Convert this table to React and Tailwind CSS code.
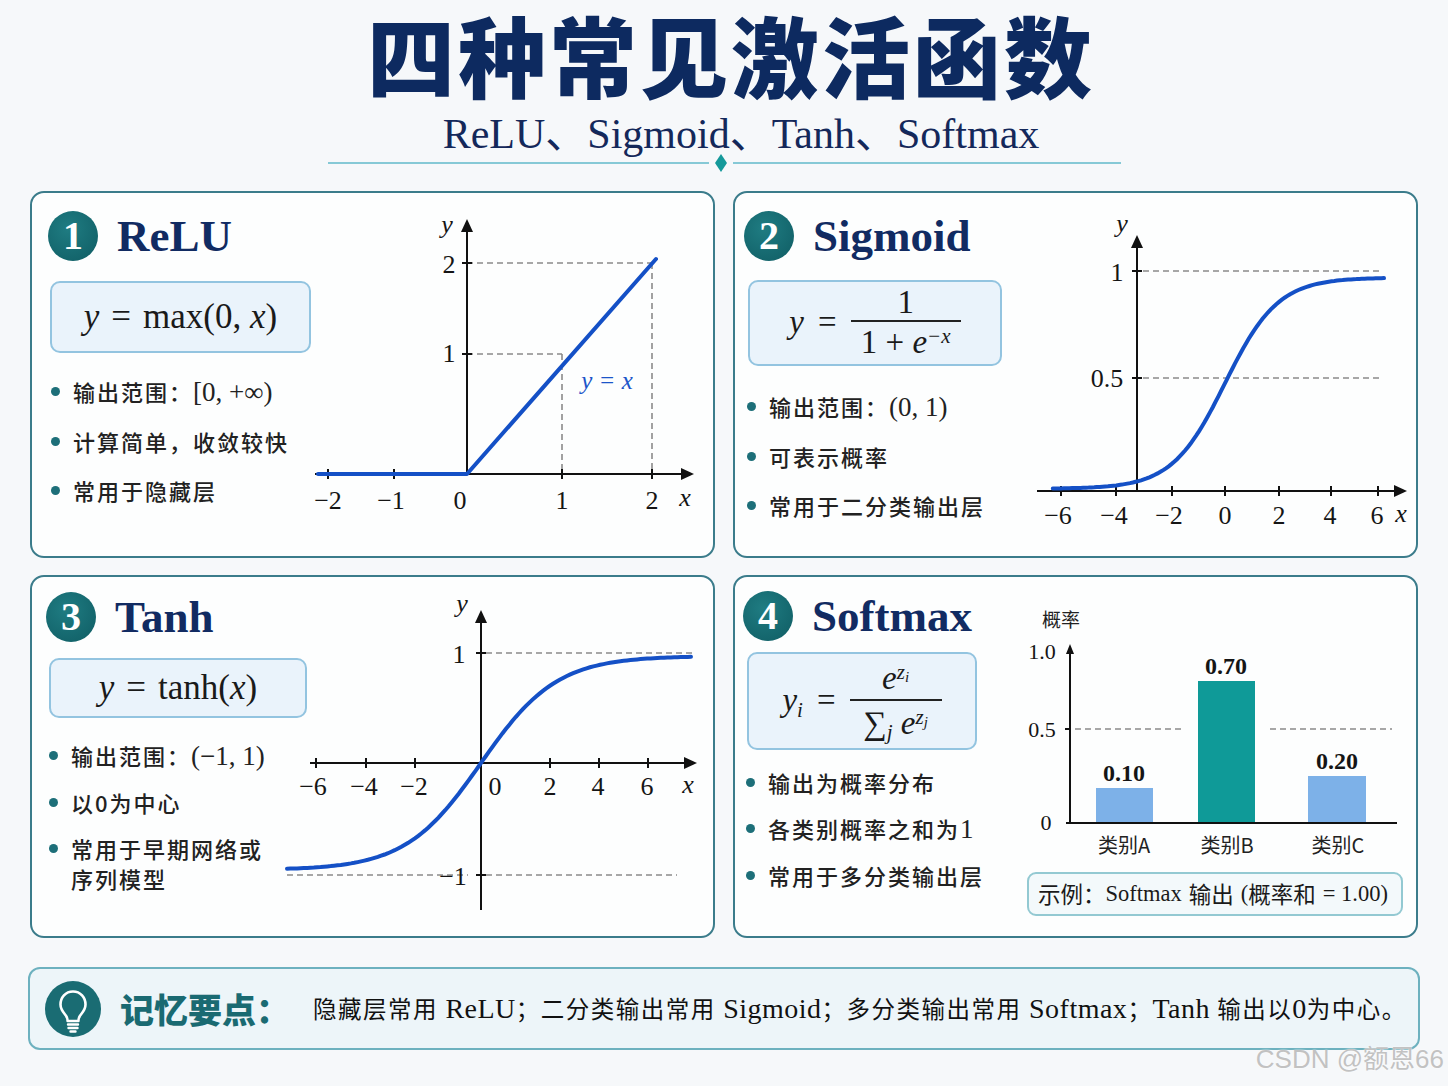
import React from "react";

const SERIF = "font-['Liberation_Serif','Noto_Sans_CJK_SC',serif]";
const CJK = "font-['Noto_Sans_CJK_SC',sans-serif]";

// curve data for the plots (page coordinates, the svgs use matching viewBoxes)
const sigmoidPts = (() => {
  const pts = [];
  for (let i = 0; i <= 120; i++) {
    const u = -6.5 + (12.5 * i) / 120;
    const x = 1225 + 26.5 * u;
    const y = 491 - 220 * (0.01 + 0.96 / (1 + Math.exp(-u)));
    pts.push(`${x.toFixed(1)},${y.toFixed(1)}`);
  }
  return pts.join(" ");
})();

const tanhPts = (() => {
  const pts = [];
  for (let i = 0; i <= 120; i++) {
    const u = -6.93 + (14.43 * i) / 120;
    const x = 481 + 28 * u;
    const y = 763 - 107 * Math.tanh(u / 2.7);
    pts.push(`${x.toFixed(1)},${y.toFixed(1)}`);
  }
  return pts.join(" ");
})();

const T = ({ x, y, children, italic, anchor = "middle", size = 26, fill = "#151515", weight }) => (
  <text
    x={x}
    y={y}
    textAnchor={anchor}
    fontSize={size}
    fontFamily="'Liberation Serif', 'Noto Sans CJK SC', serif"
    fontStyle={italic ? "italic" : "normal"}
    fontWeight={weight}
    fill={fill}
  >
    {children}
  </text>
);

const Badge = ({ n }) => (
  <div className="flex h-[50px] w-[50px] shrink-0 items-center justify-center rounded-full bg-[radial-gradient(circle_at_40%_35%,#1f7c82,#0f5c63)] font-['Liberation_Serif',serif] text-[40px] font-bold leading-none text-white">
    {n}
  </div>
);

const Heading = ({ n, children }) => (
  <div className="flex h-[50px] items-center gap-[19px]">
    <Badge n={n} />
    <h2 className="font-['Liberation_Serif',serif] text-[45px] font-bold leading-none text-[#112b62]">
      {children}
    </h2>
  </div>
);

const Bullet = ({ children }) => (
  <li className="flex items-start gap-[13px]">
    <span className="ml-[3px] mt-[11px] h-[9px] w-[9px] shrink-0 rounded-full bg-[#1d6f79]" />
    <span className={`${CJK} text-[22px] font-medium leading-[30px] tracking-[2px] text-[#222]`}>
      {children}
    </span>
  </li>
);

const M = ({ children }) => (
  <span className={`${SERIF} text-[27px] font-normal tracking-normal`}>{children}</span>
);

const L = ({ children }) => <span className="text-[28px] tracking-[0.5px]">{children}</span>;

const FormulaBox = ({ className, children }) => (
  <div
    className={`flex items-center justify-center rounded-[10px] border-2 border-[#93c4e0] bg-[#eaf3fb] ${SERIF} text-[#1a1a1a] ${className}`}
  >
    {children}
  </div>
);

const Dashes = ({ d }) => (
  <path d={d} stroke="#8a8a8a" strokeWidth="1.6" strokeDasharray="6 4" fill="none" />
);

function ReluPlot() {
  return (
    <svg className="mt-[12px]" width="400" height="320" viewBox="305 205 400 320">
      <Dashes d="M467 263 H652 M467 354 H562 M562 354 V474 M652 263 V474" />
      <line x1="315" y1="474" x2="684" y2="474" stroke="#111" strokeWidth="2" />
      <polygon points="694,474 681,468 681,480" fill="#111" />
      <line x1="467" y1="474" x2="467" y2="230" stroke="#111" strokeWidth="2" />
      <polygon points="467,219 461,232 473,232" fill="#111" />
      {[328, 394, 562, 652].map((x) => (
        <line key={x} x1={x} y1="469" x2={x} y2="479" stroke="#111" strokeWidth="2" />
      ))}
      <line x1="462" y1="263" x2="472" y2="263" stroke="#111" strokeWidth="2" />
      <line x1="462" y1="354" x2="472" y2="354" stroke="#111" strokeWidth="2" />
      <polyline
        points="318,474 467,474 656,259"
        fill="none"
        stroke="#1450c6"
        strokeWidth="4"
        strokeLinecap="round"
        strokeLinejoin="round"
      />
      <T x={447} y={233} italic>y</T>
      <T x={449} y={273}>2</T>
      <T x={449} y={362}>1</T>
      <T x={328} y={509}>−2</T>
      <T x={391} y={509}>−1</T>
      <T x={460} y={509}>0</T>
      <T x={562} y={509}>1</T>
      <T x={652} y={509}>2</T>
      <T x={685} y={506} italic>x</T>
      <T x={607} y={389} italic size={25} fill="#1c55c9">y = x</T>
    </svg>
  );
}

function SigmoidPlot() {
  return (
    <svg className="mt-[12px]" width="385" height="330" viewBox="1030 205 385 330">
      <Dashes d="M1143 271 H1380 M1143 378 H1380" />
      <line x1="1037" y1="491" x2="1396" y2="491" stroke="#111" strokeWidth="2" />
      <polygon points="1407,491 1394,485 1394,497" fill="#111" />
      <line x1="1137" y1="491" x2="1137" y2="246" stroke="#111" strokeWidth="2" />
      <polygon points="1137,235 1131,248 1143,248" fill="#111" />
      {[1061, 1116, 1172, 1225, 1279, 1331, 1378].map((x) => (
        <line key={x} x1={x} y1="486" x2={x} y2="496" stroke="#111" strokeWidth="2" />
      ))}
      <line x1="1132" y1="271" x2="1142" y2="271" stroke="#111" strokeWidth="2" />
      <line x1="1132" y1="378" x2="1142" y2="378" stroke="#111" strokeWidth="2" />
      <polyline points={sigmoidPts} fill="none" stroke="#1450c6" strokeWidth="4" strokeLinecap="round" />
      <T x={1122} y={232} italic>y</T>
      <T x={1117} y={281}>1</T>
      <T x={1107} y={387}>0.5</T>
      <T x={1058} y={524}>−6</T>
      <T x={1114} y={524}>−4</T>
      <T x={1169} y={524}>−2</T>
      <T x={1225} y={524}>0</T>
      <T x={1279} y={524}>2</T>
      <T x={1330} y={524}>4</T>
      <T x={1377} y={524}>6</T>
      <T x={1401} y={522} italic>x</T>
    </svg>
  );
}

function TanhPlot() {
  return (
    <svg className="mt-[13px]" width="425" height="330" viewBox="280 590 425 330">
      <Dashes d="M486 653 H692 M287 875 H468 M486 875 H677" />
      <line x1="310" y1="763" x2="686" y2="763" stroke="#111" strokeWidth="2" />
      <polygon points="697,763 684,757 684,769" fill="#111" />
      <line x1="481" y1="910" x2="481" y2="621" stroke="#111" strokeWidth="2" />
      <polygon points="481,610 475,623 487,623" fill="#111" />
      {[316, 366, 415, 550, 599, 648].map((x) => (
        <line key={x} x1={x} y1="758" x2={x} y2="768" stroke="#111" strokeWidth="2" />
      ))}
      <line x1="476" y1="653" x2="486" y2="653" stroke="#111" strokeWidth="2" />
      <line x1="476" y1="875" x2="486" y2="875" stroke="#111" strokeWidth="2" />
      <polyline points={tanhPts} fill="none" stroke="#1450c6" strokeWidth="4" strokeLinecap="round" />
      <T x={462} y={612} italic>y</T>
      <T x={459} y={663}>1</T>
      <T x={453} y={885}>−1</T>
      <T x={313} y={795}>−6</T>
      <T x={364} y={795}>−4</T>
      <T x={414} y={795}>−2</T>
      <T x={495} y={795}>0</T>
      <T x={550} y={795}>2</T>
      <T x={598} y={795}>4</T>
      <T x={647} y={795}>6</T>
      <T x={688} y={793} italic>x</T>
    </svg>
  );
}

function SoftmaxChart() {
  return (
    <svg width="390" height="265" viewBox="1025 600 390 265">
      <text x="1061" y="628" textAnchor="middle" fontSize="19" fontFamily="'Noto Sans CJK SC', sans-serif" fill="#222">
        概率
      </text>
      <Dashes d="M1075 730 H1183 M1270 730 H1392" />
      <line x1="1070" y1="824" x2="1070" y2="654" stroke="#111" strokeWidth="2" />
      <polygon points="1070,645 1066,655 1074,655" fill="#111" />
      <line x1="1065" y1="730" x2="1070" y2="730" stroke="#111" strokeWidth="2" />
      <line x1="1066" y1="824" x2="1397" y2="824" stroke="#111" strokeWidth="2" />
      <rect x="1096" y="789" width="57" height="34" fill="#7db1e8" />
      <rect x="1198" y="682" width="57" height="141" fill="#0f9a98" />
      <rect x="1308" y="777" width="58" height="46" fill="#7db1e8" />
      <T x={1042} y={660} size={22}>1.0</T>
      <T x={1042} y={738} size={22}>0.5</T>
      <T x={1046} y={831} size={22}>0</T>
      <T x={1124} y={782} size={24} weight="600">0.10</T>
      <T x={1226} y={675} size={24} weight="600">0.70</T>
      <T x={1337} y={770} size={24} weight="600">0.20</T>
      {[
        [1124, "类别A"],
        [1227, "类别B"],
        [1338, "类别C"],
      ].map(([x, t]) => (
        <text key={t} x={x} y="854" textAnchor="middle" fontSize="20" fontFamily="'Noto Sans CJK SC', sans-serif" fill="#222">
          {t}
        </text>
      ))}
    </svg>
  );
}

export default function App() {
  return (
    <div className="relative min-h-[1086px] w-[1448px] bg-[#f6f8fa]">
      {/* Header */}
      <header className="flex h-[191px] flex-col items-center pt-[3px]">
        <h1 className={`${CJK} ml-[14px] text-[88px] font-black leading-[100px] tracking-[3px] text-[#0d2a60]`}>
          四种常见激活函数
        </h1>
        <p className={`${SERIF} ml-[34px] mt-[7px] text-[42px] leading-[48px] text-[#14285a]`}>
          ReLU、Sigmoid、Tanh、Softmax
        </p>
        <div className="-mt-[2px] flex h-[14px] items-center gap-[6px]">
          <div className="h-[2px] w-[381px] bg-[#86c9d6]" />
          <svg width="12" height="18" viewBox="0 0 12 18">
            <polygon points="6,0 12,9 6,18 0,9" fill="#15999a" />
          </svg>
          <div className="h-[2px] w-[388px] bg-[#86c9d6]" />
        </div>
      </header>

      {/* Panels */}
      <div className="grid grid-cols-[685px_685px] gap-x-[18px] gap-y-[17px] px-[30px]">
        {/* ReLU */}
        <section className="flex h-[367px] rounded-[14px] border-2 border-[#3b7c8b] bg-[#fdfefe] pl-[16px]">
          <div className="w-[257px] pt-[18px]">
            <Heading n="1">ReLU</Heading>
            <FormulaBox className="ml-[2px] mt-[20px] h-[72px] w-[261px] text-[35px]">
              <span className="italic">y</span>
              <span className="mx-[12px]">=</span>
              <span>
                max(0, <span className="italic">x</span>)
              </span>
            </FormulaBox>
            <ul className="mt-[23px] flex flex-col gap-[19px]">
              <Bullet>
                输出范围：<M>[0, +∞)</M>
              </Bullet>
              <Bullet>计算简单，收敛较快</Bullet>
              <Bullet>常用于隐藏层</Bullet>
            </ul>
          </div>
          <ReluPlot />
        </section>

        {/* Sigmoid */}
        <section className="flex h-[367px] rounded-[14px] border-2 border-[#3b7c8b] bg-[#fdfefe] pl-[9px]">
          <div className="w-[286px] pt-[18px]">
            <Heading n="2">Sigmoid</Heading>
            <FormulaBox className="ml-[4px] mt-[19px] h-[86px] w-[254px] gap-[14px] text-[33px]">
              <span className="italic">y</span>
              <span>=</span>
              <div className="flex flex-col items-center">
                <span className="leading-[36px]">1</span>
                <div className="h-[2px] w-[110px] bg-[#222]" />
                <span className="leading-[40px]">
                  1 + <span className="italic">e</span>
                  <sup className="text-[21px] italic">−x</sup>
                </span>
              </div>
            </FormulaBox>
            <ul className="mt-[25px] flex flex-col gap-[19px]">
              <Bullet>
                输出范围：<M>(0, 1)</M>
              </Bullet>
              <Bullet>可表示概率</Bullet>
              <Bullet>常用于二分类输出层</Bullet>
            </ul>
          </div>
          <SigmoidPlot />
        </section>

        {/* Tanh */}
        <section className="flex h-[363px] rounded-[14px] border-2 border-[#3b7c8b] bg-[#fdfefe] pl-[14px]">
          <div className="w-[234px] pt-[15px]">
            <Heading n="3">Tanh</Heading>
            <FormulaBox className="ml-[3px] mt-[16px] h-[60px] w-[258px] text-[35px]">
              <span className="italic">y</span>
              <span className="mx-[12px]">=</span>
              <span>
                tanh(<span className="italic">x</span>)
              </span>
            </FormulaBox>
            <ul className="mt-[22px] flex flex-col gap-[16px]">
              <Bullet>
                输出范围：<M>(−1, 1)</M>
              </Bullet>
              <Bullet>以0为中心</Bullet>
              <Bullet>
                常用于早期网络或
                <br />
                序列模型
              </Bullet>
            </ul>
          </div>
          <TanhPlot />
        </section>

        {/* Softmax */}
        <section className="flex h-[363px] rounded-[14px] border-2 border-[#3b7c8b] bg-[#fdfefe] pl-[8px]">
          <div className="w-[282px] pt-[14px]">
            <Heading n="4">Softmax</Heading>
            <FormulaBox className="ml-[4px] mt-[11px] h-[98px] w-[230px] gap-[14px] text-[33px]">
              <span>
                <span className="italic">y</span>
                <sub className="text-[21px] italic">i</sub>
              </span>
              <span>=</span>
              <div className="flex flex-col items-center">
                <span className="leading-[42px]">
                  <span className="italic">e</span>
                  <sup className="text-[21px] italic">
                    z<sub className="text-[15px]">i</sub>
                  </sup>
                </span>
                <div className="h-[2px] w-[92px] bg-[#222]" />
                <span className="leading-[44px]">
                  ∑<sub className="text-[21px] italic">j</sub>{" "}
                  <span className="italic">e</span>
                  <sup className="text-[21px] italic">
                    z<sub className="text-[15px]">j</sub>
                  </sup>
                </span>
              </div>
            </FormulaBox>
            <ul className="mt-[17px] flex flex-col gap-[16px]">
              <Bullet>输出为概率分布</Bullet>
              <Bullet>
                各类别概率之和为<M>1</M>
              </Bullet>
              <Bullet>常用于多分类输出层</Bullet>
            </ul>
          </div>
          <div className="mt-[22px] flex flex-col">
            <SoftmaxChart />
            <div
              className={`ml-[2px] mt-[8px] flex h-[44px] w-[376px] items-center rounded-[9px] border-2 border-[#93c9d2] bg-[#f3f9fb] pl-[9px] ${SERIF} text-[22.5px] text-[#1a1a1a]`}
            >
              <span className={CJK}>示例：</span>
              <span>Softmax</span>
              <span className={`${CJK} ml-[7px]`}>输出</span>
              <span className="ml-[7px]">(</span>
              <span className={CJK}>概率和</span>
              <span className="ml-[7px]">= 1.00)</span>
            </div>
          </div>
        </section>
      </div>

      {/* Memo bar */}
      <div className="mx-[28px] mt-[29px] flex h-[83px] items-center rounded-[12px] border-2 border-[#6db1bf] bg-[#edf5f9] pl-[15px]">
        <svg className="shrink-0" width="56" height="56" viewBox="0 0 56 56">
          <circle cx="28" cy="28" r="28" fill="#1a6c73" />
          <path
            d="M28 10.5C20.5 10.5 15.5 16.5 15.5 23.5C15.5 28.5 18.5 31.5 20.8 34.5C22.2 36.5 22.6 38 22.6 40H33.4C33.4 38 33.8 36.5 35.2 34.5C37.5 31.5 40.5 28.5 40.5 23.5C40.5 16.5 35.5 10.5 28 10.5Z"
            fill="none"
            stroke="#fff"
            strokeWidth="2.6"
            strokeLinejoin="round"
          />
          <path d="M23 43.5H33M23.5 47H32.5M25.5 50.5H30.5" stroke="#fff" strokeWidth="2.4" strokeLinecap="round" />
        </svg>
        <span className={`${CJK} ml-[19px] shrink-0 whitespace-nowrap text-[34px] font-black leading-none text-[#1a6a72]`}>
          记忆要点：
        </span>
        <p className={`${SERIF} ml-[23px] whitespace-nowrap text-[23.5px] leading-none tracking-[1.5px] text-[#111]`}>
          隐藏层常用 <L>ReLU</L>；二分类输出常用 <L>Sigmoid</L>；多分类输出常用 <L>Softmax</L>；<L>Tanh</L> 输出以<L>0</L>为中心。
        </p>
      </div>

      <div className="absolute right-[4px] top-[1043px] font-['Liberation_Sans','Noto_Sans_CJK_SC',sans-serif] text-[26px] leading-[32px] text-[#c2c2c2] [text-shadow:0_0_2px_#fff]">
        CSDN @额恩66
      </div>
    </div>
  );
}
